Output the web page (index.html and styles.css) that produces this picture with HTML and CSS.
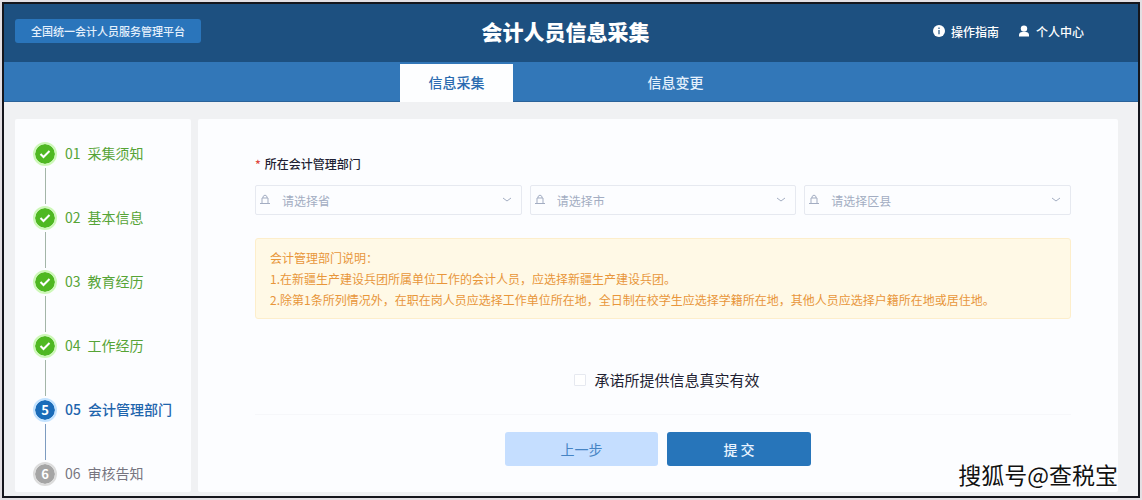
FILE: index.html
```html
<!DOCTYPE html>
<html lang="zh-CN">
<head>
	<meta charset="utf-8">
	<meta name="viewport" content="width=device-width, initial-scale=1">
	<title>会计人员信息采集</title>
	<link rel="stylesheet" href="styles.css">
</head>

<body>
	<div class="page">
		<header class="header">
			<div class="header-left">
				<a class="platform" href="#">全国统一会计人员服务管理平台</a>
			</div>
			<h1>会计人员信息采集</h1>
			<div class="header-right">
				<a href="#">
					<svg width="12" height="12" viewBox="0 0 12 12"><circle cx="6" cy="6" r="6" fill="#fff"/><path d="M6 2.6v1.3M6 5v4.2" stroke="#1d5080" stroke-width="1.2"/></svg>
					操作指南
				</a>
				<a href="#">
					<svg width="12" height="12" viewBox="0 0 12 12"><circle cx="6" cy="3.6" r="3.2" fill="#fff"/><path d="M1 11.5V10c0-2 1.5-3 3-3h4c1.5 0 3 1 3 3v1.5z" fill="#fff"/></svg>
					个人中心
				</a>
			</div>
		</header>

		<nav class="nav">
			<a class="active" href="#">信息采集</a>
			<a href="#">信息变更</a>
		</nav>

		<main class="main">
			<ol class="card steps">
				<li class="done">
					<div class="mark"><span class="dot"><svg width="12" height="10" viewBox="0 0 12 10"><path d="M1.5 5l3 3L10.500 2"/></svg></span></div>
					<div class="name"><span>01</span><span>采集须知</span></div>
				</li>
				<li class="done">
					<div class="mark"><span class="dot"><svg width="12" height="10" viewBox="0 0 12 10"><path d="M1.5 5l3 3L10.500 2"/></svg></span></div>
					<div class="name"><span>02</span><span>基本信息</span></div>
				</li>
				<li class="done">
					<div class="mark"><span class="dot"><svg width="12" height="10" viewBox="0 0 12 10"><path d="M1.5 5l3 3L10.500 2"/></svg></span></div>
					<div class="name"><span>03</span><span>教育经历</span></div>
				</li>
				<li class="done">
					<div class="mark"><span class="dot"><svg width="12" height="10" viewBox="0 0 12 10"><path d="M1.5 5l3 3L10.500 2"/></svg></span></div>
					<div class="name"><span>04</span><span>工作经历</span></div>
				</li>
				<li class="current">
					<div class="mark"><span class="dot">5</span></div>
					<div class="name"><span>05</span><span>会计管理部门</span></div>
				</li>
				<li class="wait">
					<div class="mark"><span class="dot">6</span></div>
					<div class="name"><span>06</span><span>审核告知</span></div>
				</li>
			</ol>

			<form class="card form">
				<fieldset>
					<legend><span class="required">*</span>所在会计管理部门</legend>
					<div class="selects">
						<div class="select">
							<svg class="place" width="10" height="12" viewBox="0 0 10 12"><path d="M0 10.5h10M2 10V5h6v5M3 5V3.500L5 2l2 1.500V5"/></svg>
							<select aria-label="省"><option>请选择省</option></select>
							<svg class="arrow" width="10" height="6" viewBox="0 0 10 6"><path d="M1 1l4 3 4-3"/></svg>
						</div>
						<div class="select">
							<svg class="place" width="10" height="12" viewBox="0 0 10 12"><path d="M0 10.5h10M2 10V5h6v5M3 5V3.500L5 2l2 1.500V5"/></svg>
							<select aria-label="市"><option>请选择市</option></select>
							<svg class="arrow" width="10" height="6" viewBox="0 0 10 6"><path d="M1 1l4 3 4-3"/></svg>
						</div>
						<div class="select">
							<svg class="place" width="10" height="12" viewBox="0 0 10 12"><path d="M0 10.5h10M2 10V5h6v5M3 5V3.500L5 2l2 1.500V5"/></svg>
							<select aria-label="区县"><option>请选择区县</option></select>
							<svg class="arrow" width="10" height="6" viewBox="0 0 10 6"><path d="M1 1l4 3 4-3"/></svg>
						</div>
					</div>
				</fieldset>

				<div class="notice">
					<p>会计管理部门说明：</p>
					<p>1.在新疆生产建设兵团所属单位工作的会计人员，应选择新疆生产建设兵团。</p>
					<p>2.除第1条所列情况外，在职在岗人员应选择工作单位所在地，全日制在校学生应选择学籍所在地，其他人员应选择户籍所在地或居住地。</p>
				</div>

				<label class="promise" for="promise">
					<input id="promise" type="checkbox">
					承诺所提供信息真实有效
				</label>

				<div class="buttons">
					<button class="prev" type="button">上一步</button>
					<button class="submit" type="submit">提 交</button>
				</div>
			</form>
		</main>

		<div class="watermark">搜狐号@查税宝</div>
	</div>
</body>
</html>
```
FILE: styles.css
```css
*{
	box-sizing: border-box;
}
body{
	margin: 0;
	padding: 2px;
	min-height: 100vh;
	display: flex;
	background-color: #e3dfe3;
	font-family: "Noto Sans CJK SC", "Noto Sans", sans-serif;
	font-size: 12px;
	color: #1f1f33;
}
a{
	color: inherit;
	text-decoration: none;
}
.page{
	position: relative;
	flex: 1;
	display: flex;
	flex-direction: column;
	border: 2px solid #15161c;
	background-color: #f0f1f3;
}

/* header */
.header{
	display: grid;
	grid-template-columns: 1fr auto 1fr;
	align-items: center;
	height: 58px;
	padding: 0 54px 4px 11px;
	background-color: #1d5080;
	color: #fff;
}
.header h1{
	margin: 0;
	padding-left: 32px;
	font-size: 21px;
	font-weight: 900;
	line-height: 30px;
}
.platform{
	display: inline-block;
	padding: 0 16px;
	border-radius: 3px;
	background-color: #2a75bb;
	color: #e4f0fc;
	font-size: 11px;
	font-weight: 500;
	line-height: 24px;
}
.header-right{
	display: flex;
	justify-content: flex-end;
	gap: 19px;
	font-weight: 500;
}
.header-right a{
	display: flex;
	align-items: center;
	gap: 6px;
}

/* tabs */
.nav{
	display: flex;
	justify-content: center;
	gap: 106px;
	height: 40px;
	padding: 2px 10px 0 0;
	background-color: #3277b8;
	box-shadow: inset 0 -1px 0 #2b6299;
	color: #e4f0fc;
	font-size: 14px;
	font-weight: 500;
}
.nav a{
	width: 113px;
	line-height: 36px;
	text-align: center;
}
.nav .active{
	background-color: #fdfeff;
	color: #2a6bb0;
}

.main{
	flex: 1;
	display: flex;
	gap: 7px;
	padding: 17px 20px 4px 11px;
}
.card{
	margin: 0;
	border-radius: 2px;
	background-color: #fcfdff;
}

/* steps */
.steps{
	flex: 0 0 176px;
	padding: 23px 0 0 18px;
	list-style: none;
	font-size: 14px;
	line-height: 22px;
}
.steps li{
	display: flex;
	gap: 8px;
	height: 64px;
}
.steps li:last-child{
	height: 24px;
}
.mark{
	display: flex;
	flex-direction: column;
	align-items: center;
}
.steps li:not(:last-child) .mark::after{
	content: "";
	flex: 1;
	width: 1px;
	margin: 2px 0;
	background-color: #a3b5a8;
}
.steps li.current .mark::after{
	background-color: #7d9cc0;
}
.dot{
	display: flex;
	align-items: center;
	justify-content: center;
	width: 24px;
	height: 24px;
	border: 2px solid;
	border-radius: 50%;
	background-clip: padding-box;
	color: #fff;
	font-size: 13px;
	font-weight: 700;
}
.dot path{
	fill: none;
	stroke: #fff;
	stroke-width: 2;
}
.name{
	display: flex;
	gap: 7px;
}
.done{
	color: #56a436;
}
.done .dot{
	border-color: #cdf8b8;
	background-color: #4fb822;
}
.current{
	color: #1f65ad;
	font-weight: 500;
}
.current .dot{
	border-color: #c2e2ff;
	background-color: #1b6cb9;
}
.wait{
	color: #77757f;
}
.wait .dot{
	border-color: #dcdcdc;
	background-color: #a5a5a5;
}

/* form */
.form{
	flex: 1;
	padding: 36px 47px 0 57px;
}
fieldset{
	margin: 0;
	padding: 0;
	border: 0;
}
legend{
	padding: 0;
	font-weight: 500;
	line-height: 18px;
}
.required{
	margin-right: 4px;
	color: #e0483e;
}
.selects{
	display: grid;
	grid-template-columns: 1fr 1fr 1fr;
	gap: 8px;
	margin-top: 12px;
}
.select{
	position: relative;
}
.select select{
	width: 100%;
	height: 30px;
	padding: 0 26px;
	border: 1px solid #e6e9f0;
	border-radius: 2px;
	background-color: transparent;
	color: #a3adc2;
	font: inherit;
	appearance: none;
}
.select svg{
	position: absolute;
	fill: none;
	stroke: #a3adc2;
}
.place{
	top: 8px;
	left: 5px;
}
.arrow{
	top: 12px;
	right: 10px;
}
.notice{
	margin-top: 23px;
	padding: 8px 14px;
	border: 1px solid #fdeecb;
	border-radius: 3px;
	background-color: #fff9e6;
	color: #e8963a;
	line-height: 21px;
}
.notice p{
	margin: 0;
}
.promise{
	display: flex;
	align-items: center;
	justify-content: center;
	gap: 8px;
	margin-top: 50px;
	padding: 0 0 23px 8px;
	border-bottom: 1px solid #f6f7fa;
	font-size: 15px;
	line-height: 22px;
}
.promise input{
	width: 12px;
	height: 12px;
	margin: 0;
	border: 1px solid #e6e9f0;
	border-radius: 1px;
	background-color: #fff;
	appearance: none;
}
.promise input:checked{
	background-color: #2775ba;
}
.buttons{
	display: flex;
	justify-content: center;
	gap: 9px;
	margin-top: 17px;
	padding-right: 10px;
}
.buttons button{
	width: 144px;
	height: 34px;
	padding: 0;
	border: 0;
	border-radius: 3px;
	font: inherit;
	font-size: 14px;
}
.buttons .prev{
	width: 153px;
	background-color: #c5deff;
	color: #4684c4;
}
.buttons .submit{
	background-color: #2775ba;
	color: #eaf4ff;
	font-weight: 500;
}

.watermark{
	position: absolute;
	right: 20px;
	bottom: 5px;
	color: #111;
	font-size: 23px;
	line-height: 34px;
	text-shadow: 1px 1px 0 #fff, -1px -1px 0 #fff;
}
```
